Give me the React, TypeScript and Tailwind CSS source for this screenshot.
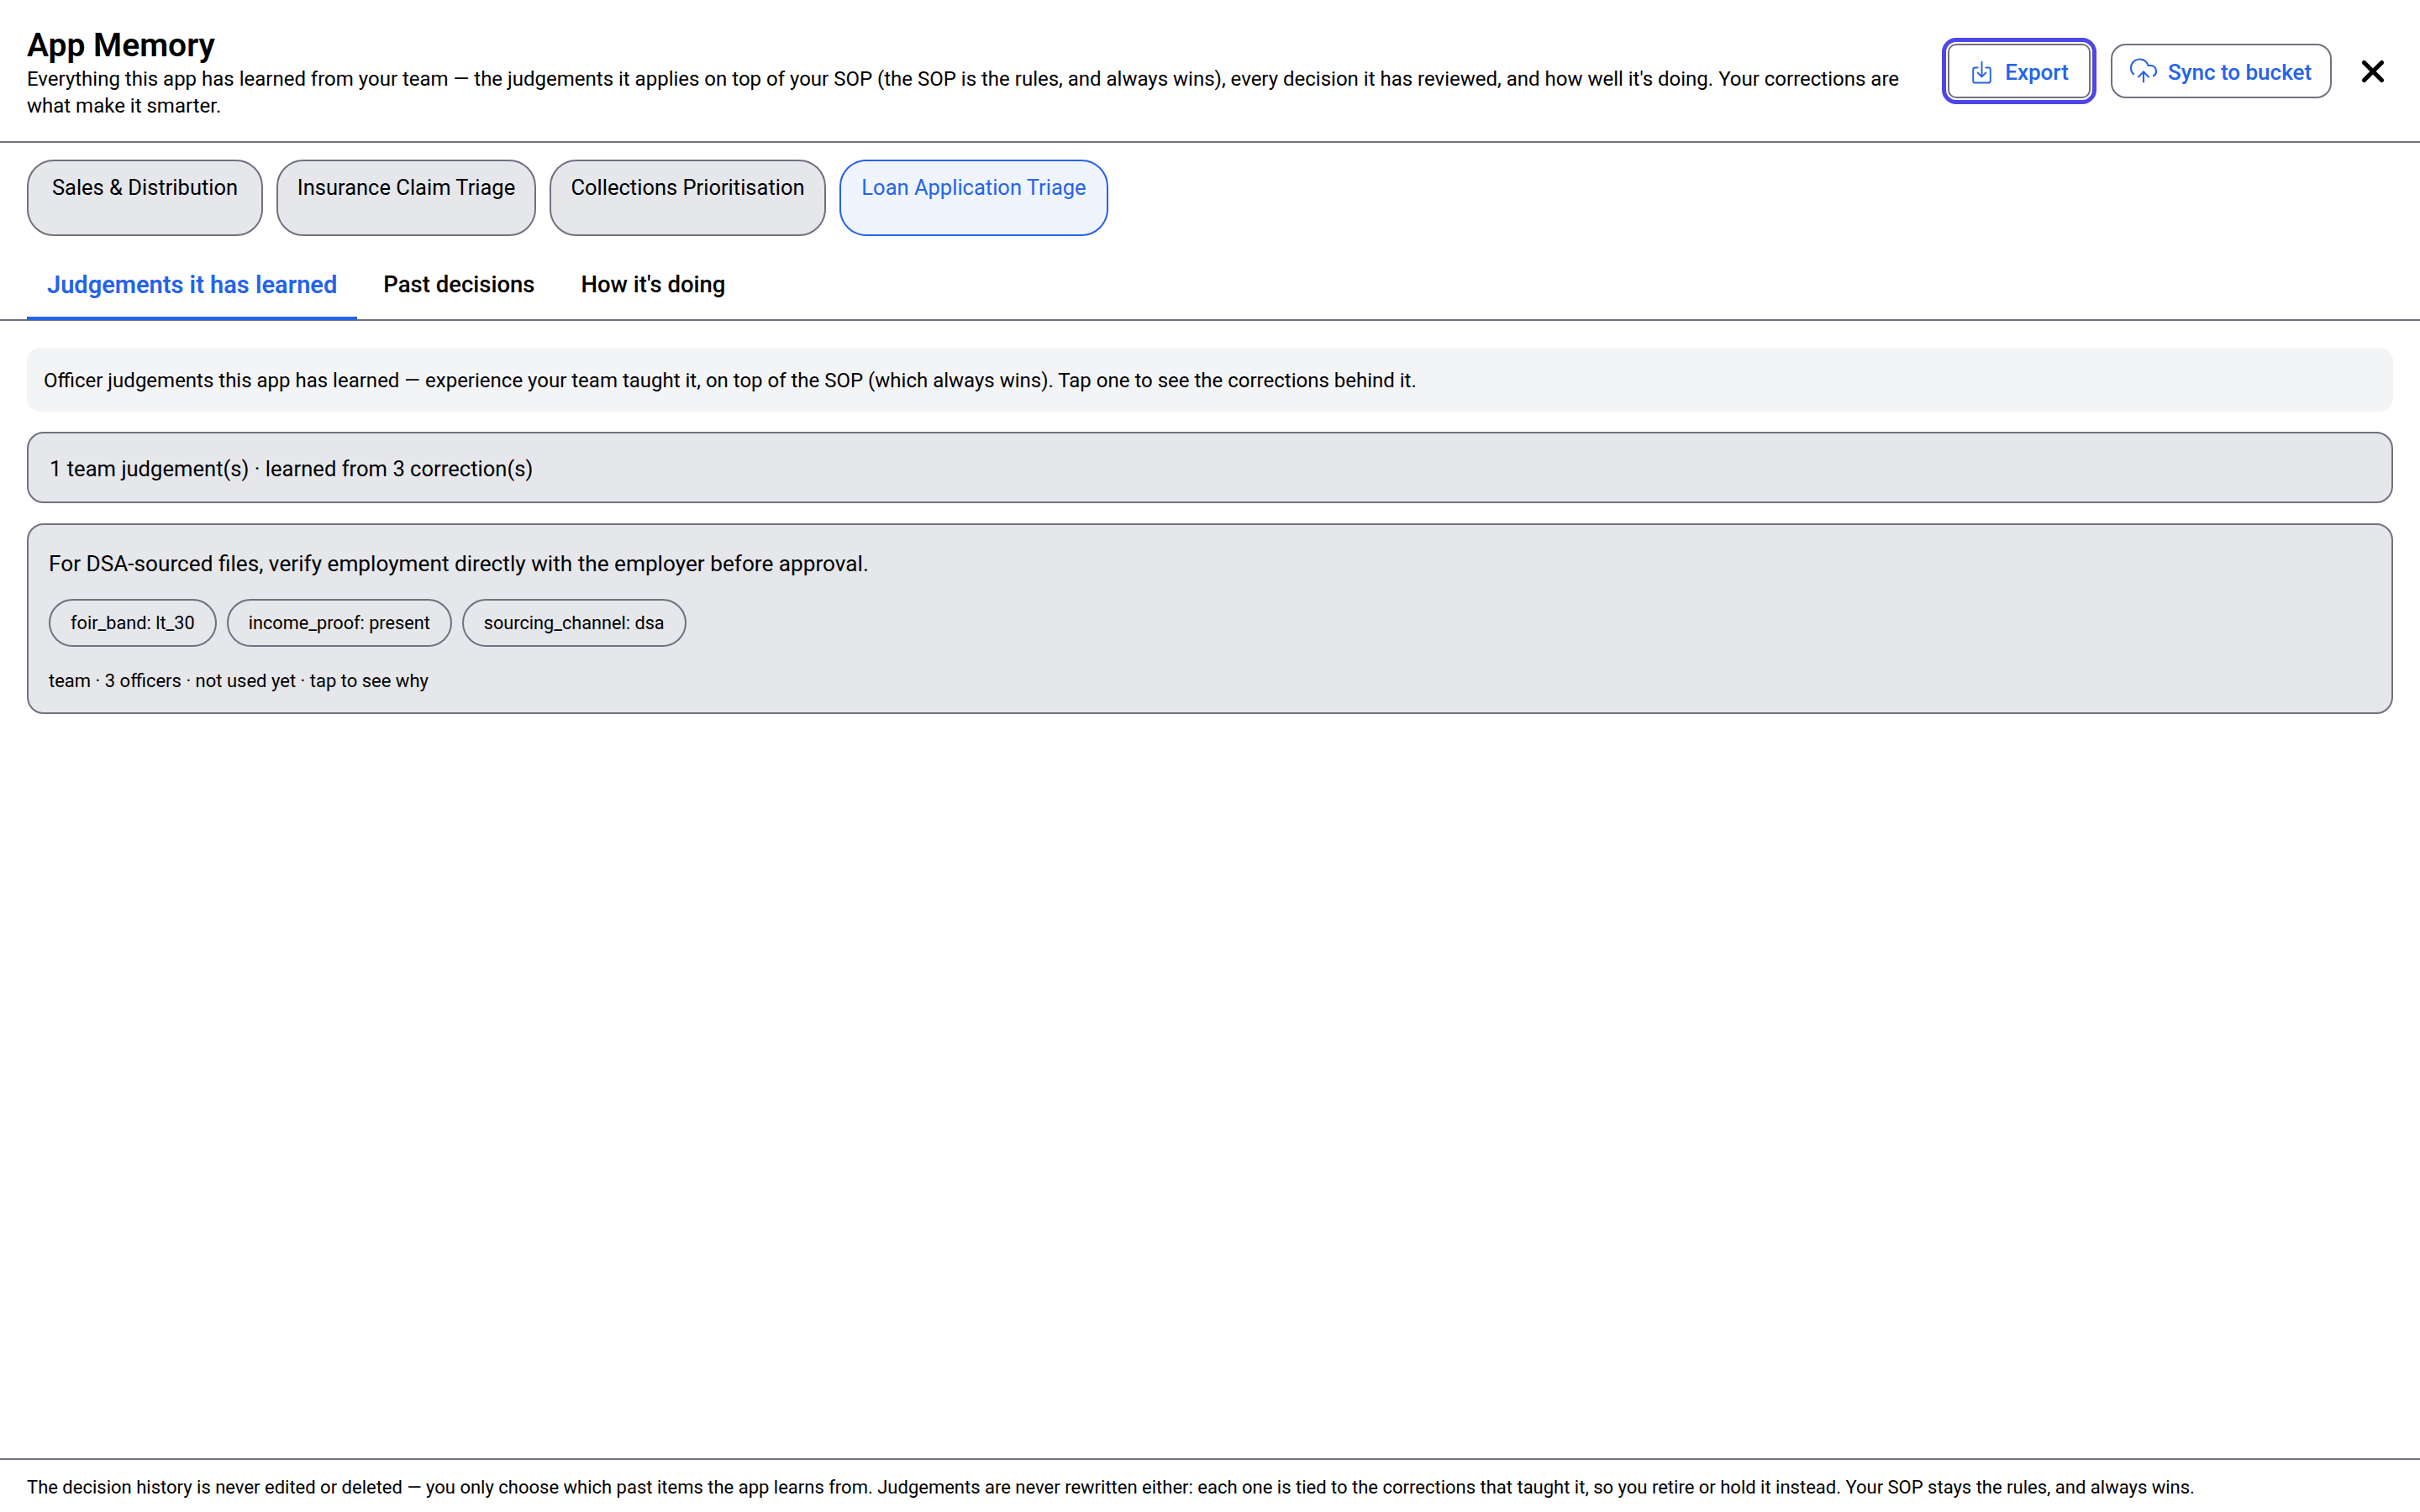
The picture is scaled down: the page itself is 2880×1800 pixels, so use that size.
import { CloudUpload, X } from "lucide-react";

const apps = [
  { name: "Sales & Distribution", width: "w-[281px]" },
  { name: "Insurance Claim Triage", width: "w-[309px]" },
  { name: "Collections Prioritisation", width: "w-[329px]" },
  { name: "Loan Application Triage", width: "w-[320px]" },
];
const tabs = ["Judgements it has learned", "Past decisions", "How it's doing"];
const tags = ["foir_band: lt_30", "income_proof: present", "sourcing_channel: dsa"];

function ExportIcon() {
  return (
    <svg width="29" height="29" viewBox="0 0 24 24" fill="none" stroke="currentColor" strokeWidth="1.6" strokeLinecap="round" strokeLinejoin="round">
      <path d="M8 7H5.5a2 2 0 0 0-2 2v11a2 2 0 0 0 2 2h13a2 2 0 0 0 2-2V9a2 2 0 0 0-2-2H16" />
      <path d="M12 1.5V16M8 12l4 4 4-4" />
    </svg>
  );
}

export default function App() {
  return (
    <div className="h-screen flex flex-col bg-white text-black font-['Roboto',sans-serif] text-[24px]">
      <header className="h-[170px] shrink-0 flex items-start border-b-2 border-[#71717f] pl-8 pr-[35px]">
        <div className="flex-1 pt-[31px]">
          <h1 className="text-[39px] leading-[46px] font-semibold">App Memory</h1>
          <p className="pt-[1px] leading-[32px]">
            Everything this app has learned from your team — the judgements it applies on top of your SOP (the SOP is the rules, and always wins), every decision it has reviewed, and how well it's doing. Your corrections are what make it smarter.
          </p>
        </div>
        <div className="flex items-center gap-6 pt-[52px] ml-12">
          <button className="w-[170px] h-[65px] pt-[3px] flex items-center justify-center gap-[13px] rounded-[10px] border-2 border-[#71717f] text-[#2563eb] text-[26px] font-medium outline-[5px] outline-offset-[2px] outline-[#4f46e5]">
            <ExportIcon />
            Export
          </button>
          <button className="w-[263px] h-[65px] pt-[3px] pr-[3px] flex items-center justify-center gap-[11px] rounded-[18px] border-2 border-[#71717f] text-[#2563eb] text-[26px] font-medium">
            <CloudUpload size={36} strokeWidth={1.4} className="-mt-1" />
            Sync to bucket
          </button>
          <X size={42} strokeWidth={3} className="ml-1" />
        </div>
      </header>

      <div className="flex gap-[16px] px-8 pt-5">
        {apps.map((app, i) => (
          <button
            key={app.name}
            className={`${app.width} h-[91px] pt-[13px] pb-[40px] rounded-[32px] border-2 text-[25.5px] leading-[36px] ${
              i === 3 ? "border-[#2563eb] bg-[#eff4ff] text-[#2563eb]" : "border-[#71717f] bg-[#e5e7eb]"
            }`}
          >
            {app.name}
          </button>
        ))}
      </div>

      <nav className="flex gap-[7px] px-8 mt-[20px] border-b-2 border-[#71717f] h-[81px]">
        {tabs.map((tab, i) => (
          <div
            key={tab}
            className={`h-[80px] px-6 pt-[19px] leading-[38px] ${
              i === 0 ? "text-[29px] font-semibold border-b-4 border-[#2563eb] text-[#2563eb]" : "text-[27.5px] font-medium"
            }`}
          >
            {tab}
          </div>
        ))}
      </nav>

      <main className="flex-1 px-8 pt-8 flex flex-col gap-6">
        <div className="h-[76px] pt-[2px] flex items-center px-5 rounded-2xl bg-[#f3f4f6]">
          Officer judgements this app has learned — experience your team taught it, on top of the SOP (which always wins). Tap one to see the corrections behind it.
        </div>
        <div className="h-[85px] pt-[4px] flex items-center px-[25px] rounded-[20px] border-2 border-[#71717f] bg-[#e5e7eb] text-[25.6px]">
          1 team judgement(s) · learned from 3 correction(s)
        </div>
        <div className="h-[227px] px-[24px] pt-[28px] rounded-[20px] border-2 border-[#71717f] bg-[#e5e7eb]">
          <p className="text-[26.2px] leading-[36px]">For DSA-sourced files, verify employment directly with the employer before approval.</p>
          <div className="flex gap-[12px] mt-[24px]">
            {tags.map((tag) => (
              <span key={tag} className="h-[57px] pt-[2px] flex items-center px-6 rounded-full border-2 border-[#71717f] text-[21.7px]">
                {tag}
              </span>
            ))}
          </div>
          <p className="mt-[25px] text-[22px] leading-[32px]">team · 3 officers · not used yet · tap to see why</p>
        </div>
      </main>

      <footer className="h-[64px] pt-[3px] shrink-0 flex items-center border-t-2 border-[#71717f] px-8 text-[22px]">
        The decision history is never edited or deleted — you only choose which past items the app learns from. Judgements are never rewritten either: each one is tied to the corrections that taught it, so you retire or hold it instead. Your SOP stays the rules, and always wins.
      </footer>
    </div>
  );
}
